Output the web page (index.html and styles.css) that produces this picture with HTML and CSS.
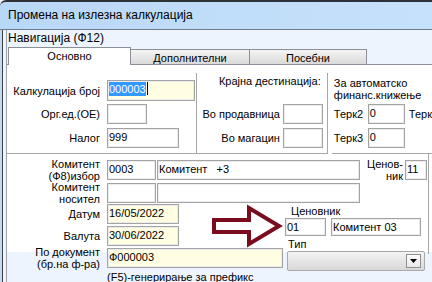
FILE: index.html
```html
<!DOCTYPE html>
<html lang="mk">
<head>
  <meta charset="UTF-8" />
  <title>Промена на излезна калкулација</title>
  <link rel="stylesheet" href="styles.css">
</head>
<body>

  <!-- Window title -->
  <div class="titlebar">Промена на излезна калкулација</div>

  <div class="client">
    <div class="client-body">
      <div class="nav">
        <div class="nav-title">Навигација (Ф12)</div>

        <!-- Tabs -->
        <div class="tabs">
          <div class="tab active">Основно</div>
          <div class="tab t2">Дополнителни</div>
          <div class="tab t3">Посебни</div>
        </div>

        <div class="page">
          <div class="top-row">
            <!-- Calculation -->
            <div class="group g-calc">
              <div class="field f1">
                <span class="lbl">Калкулација број</span>
                <span class="inp yellow w87"><span class="sel">000003</span><span class="caret"></span></span>
              </div>
              <div class="field f2">
                <span class="lbl">Орг.ед.(ОЕ)</span>
                <span class="inp w40"></span>
              </div>
              <div class="field f3">
                <span class="lbl">Налог</span>
                <span class="inp w72">999</span>
              </div>
            </div>

            <!-- Destination -->
            <div class="group g-dest">
              <div class="g-title">Крајна дестинација:</div>
              <div class="field d1">
                <span class="lbl-d">Во продавница</span>
                <span class="inp w40"></span>
              </div>
              <div class="field d2">
                <span class="lbl-d">Во магацин</span>
                <span class="inp w40"></span>
              </div>
            </div>

            <!-- Auto booking -->
            <div class="group g-fin">
              <div class="g-text">За автоматско<br>финанс.книжење</div>
              <div class="field t-1">
                <span class="lbl-t">Терк2</span>
                <span class="inp w37">0</span>
                <span class="after">Терк</span>
              </div>
              <div class="field t-2">
                <span class="lbl-t">Терк3</span>
                <span class="inp w37">0</span>
              </div>
            </div>
          </div>

          <!-- Main data -->
          <div class="group g-main">
            <div class="field m1">
              <span class="lbl two">Комитент<br>(Ф8)избор</span>
              <span class="inp w49">0003</span>
              <span class="inp w203 gap1 pre">Комитент   +3</span>
              <span class="lbl-c two">Ценов-<br>ник</span>
              <span class="inp w22">11</span>
            </div>
            <div class="field m2">
              <span class="lbl two">Комитент<br>носител</span>
              <span class="inp w49"></span>
              <span class="inp w203 gap1"></span>
            </div>

            <div class="split">
              <div class="col-left">
                <div class="field m3">
                  <span class="lbl">Датум</span>
                  <span class="inp yellow w72">16/05/2022</span>
                </div>
                <div class="field m4">
                  <span class="lbl">Валута</span>
                  <span class="inp yellow w72">30/06/2022</span>
                </div>
                <div class="field m5">
                  <span class="lbl two">По документ<br>(бр.на ф-ра)</span>
                  <span class="inp yellow w176">Ф000003</span>
                </div>
                <div class="hint">(F5)-генерирање за префикс</div>
              </div>

              <div class="col-right">
                <div class="c-lbl">Ценовник</div>
                <div class="c-row">
                  <span class="inp h18 w41">01</span>
                  <span class="inp h18 w90">Комитент 03</span>
                </div>
                <div class="c-lbl tip">Тип</div>
                <div class="combo">
                  <span class="combo-btn">
                    <svg width="7" height="4" viewBox="0 0 7 4"><path d="M0 0H7L3.5 4Z" fill="#000"/></svg>
                  </span>
                </div>
              </div>
            </div>

            <!-- annotation arrow -->
            <svg class="arrow" width="76" height="46" viewBox="0 0 76 46">
              <path d="M4 17H39V5L69 23L39 41V29H4Z" fill="none" stroke="#7b0c1e" stroke-width="4" stroke-linejoin="miter"/>
            </svg>
          </div>
        </div>
      </div>
    </div>
  </div>

</body>
</html>
```

FILE: styles.css
```css
/* Base */
* {
  box-sizing: border-box;
}

body {
  margin: 0;
  width: 432px;
  height: 282px;
  overflow: hidden;
  background-color: #eef4fd;
  font-family: "Liberation Sans", Arial, sans-serif;
  font-size: 11px;
  color: #000;
}

/* Title bar */
.titlebar {
  height: 30px;
  padding-left: 8px;
  border-top: 2px solid #2e3236;
  border-bottom: 1px solid #6d7b8b;
  border-top-left-radius: 6px;
  background: linear-gradient(to right, #b9d8f6, #c6e1fb);
  font-size: 12px;
  line-height: 27px;
}

/* Client area */
.client {
  height: 252px;
  border-left: 2px solid #c2dbf4;
}

.client-body {
  height: 100%;
  padding-left: 3px;
  border-left: 1px solid #3d4045;
}

.nav {
  height: 100%;
  border-left: 1px solid #9ea3ab;
}

.nav-title {
  height: 17px;
  padding-left: 1px;
  font-size: 12px;
  line-height: 16px;
}

/* Tabs */
.tabs {
  display: flex;
  align-items: flex-end;
  height: 17px;
  padding-left: 1px;
}

.tab {
  height: 15px;
  border: 1px solid #8a8f98;
  border-bottom: none;
  background: linear-gradient(#f4f4f4, #dadada);
  text-align: center;
  line-height: 14px;
  padding-top: 1px;
}

.tab.active {
  width: 123px;
  height: 18px;
  margin-bottom: -1px;
  position: relative;
  z-index: 1;
  background: #fff;
  line-height: 15px;
}

.tab.t2 {
  width: 120px;
  margin-left: -1px;
}

.tab.t3 {
  width: 118px;
  margin-left: -1px;
}

/* Tab page */
.page {
  height: 188px;
  background: #fff;
  border-top: 1px solid #8a8f98;
}

.top-row {
  display: flex;
  margin-top: 8px;
}

.group {
  border-color: #a7a7a7;
  border-style: solid;
  border-width: 0;
}

.field {
  display: flex;
  align-items: center;
}

.lbl {
  width: 94px;
  margin-right: 6px;
  padding-right: 1px;
  text-align: right;
  white-space: nowrap;
}

.two {
  line-height: 12px;
}

/* Inputs */
.inp {
  display: block;
  height: 20px;
  padding: 0 1px;
  border: 1px solid #a3a3a3;
  box-shadow: inset 0 0 0 1px #ececec;
  background: #fff;
  line-height: 17px;
  white-space: nowrap;
  overflow: hidden;
}

.inp.yellow {
  background: #fffde2;
}

.h18 {
  height: 18px;
  line-height: 16px;
}

.pre {
  white-space: pre;
}

.gap1 { margin-left: 1px; }
.w22 { width: 22px; }
.w37 { width: 37px; }
.w40 { width: 40px; }
.w41 { width: 41px; }
.w49 { width: 49px; }
.w72 { width: 72px; }
.w87 { width: 88px; }
.w90 { width: 90px; }
.w176 { width: 176px; }
.w203 { width: 203px; }

.sel {
  background: #3399ff;
  color: #fff;
  padding: 1px 0;
}

.caret {
  display: inline-block;
  width: 1px;
  height: 13px;
  margin-left: 1px;
  vertical-align: -2px;
  background: #000;
}

/* Calculation group */
.g-calc {
  width: 190px;
  height: 81px;
  padding-top: 7px;
  border-right-width: 1px;
  border-bottom-width: 1px;
}

.f1 { height: 21px; margin-bottom: 3px; }
.f1 .inp { height: 21px; }
.f2 { height: 20px; margin-bottom: 4px; }
.f3 { height: 20px; }

/* Destination group */
.g-dest {
  width: 131px;
  height: 81px;
  padding-top: 2px;
  border-right-width: 1px;
  border-bottom-width: 1px;
}

.g-title {
  padding-left: 22px;
  line-height: 13px;
}

.lbl-d {
  width: 83px;
  margin-right: 3px;
  text-align: right;
  white-space: nowrap;
}

.d1 { margin-top: 16px; margin-bottom: 4px; }

/* Finance group */
.g-fin {
  flex: 1;
  height: 81px;
  margin-left: 4px;
  padding-top: 4px;
  padding-left: 2px;
  border-bottom-width: 1px;
}

.g-text {
  line-height: 12px;
  white-space: nowrap;
}

.lbl-t {
  width: 34px;
}

.after {
  margin-left: 4px;
  white-space: nowrap;
}

.t-1 { margin-top: 3px; margin-bottom: 4px; }

/* Main group */
.g-main {
  position: relative;
  width: 422px;
  height: 100px;
  padding-top: 6px;
  border-right-width: 1px;
}

.m1, .m2, .m5 { height: 20px; }
.m1 { margin-bottom: 3px; }
.m2 { margin-bottom: 1px; }
.m3, .m4 { margin-bottom: 2px; }
.m5 { margin-bottom: 3px; }

.lbl-c {
  width: 45px;
  padding-right: 2px;
  text-align: right;
}

.split {
  display: flex;
}

.col-left {
  width: 278px;
}

.hint {
  margin-left: 100px;
  line-height: 13px;
  white-space: nowrap;
}

.col-right {
  flex: 1;
}

.c-lbl {
  margin-top: 1px;
  padding-left: 6px;
  line-height: 13px;
}

.c-lbl.tip {
  margin-top: 2px;
  padding-left: 3px;
}

.c-row {
  display: flex;
  gap: 5px;
}

/* Combo box */
.combo {
  display: flex;
  justify-content: flex-end;
  align-items: center;
  width: 138px;
  height: 20px;
  margin-left: 2px;
  padding-right: 3px;
  border: 1px solid #a9a9a9;
  border-radius: 2px;
  background: linear-gradient(#f3f3f3, #d8d8d8);
}

.combo-btn {
  display: flex;
  justify-content: center;
  align-items: center;
  width: 15px;
  height: 14px;
  border: 1px solid #8f8f8f;
  background: linear-gradient(#fdfdfd, #e9e9e9);
}

/* Annotation arrow */
.arrow {
  position: absolute;
  left: 203px;
  top: 49px;
}
```
